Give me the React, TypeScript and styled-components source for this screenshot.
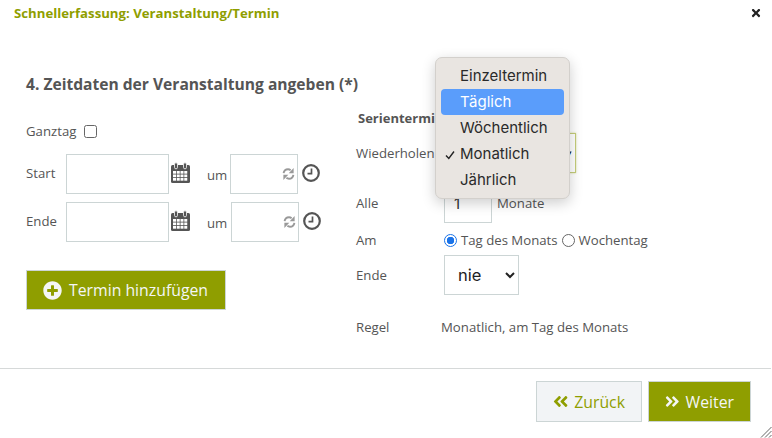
import React from "react";
import styled, { createGlobalStyle } from "styled-components";
import { FaAngleDoubleLeft, FaAngleDoubleRight, FaPlusCircle, FaTimes } from "react-icons/fa";

const Global = createGlobalStyle`
  html, body { margin: 0; padding: 0; background: #fff; }
  body { font-family: "Open Sans", sans-serif; color: #555; font-size: 13.2px; }
  * { box-sizing: border-box; }
`;

const Dialog = styled.div`
  position: relative;
  width: 772px;
  height: 438px;
  overflow: hidden;
  display: flex;
  flex-direction: column;
`;
const Header = styled.header`
  display: flex;
  justify-content: space-between;
  align-items: center;
  height: 26px;
  padding: 0 10px 0 14px;
`;
const Title = styled.h1`
  margin: 0;
  font-size: 13.2px;
  font-weight: 700;
  color: #8f9e00;
`;
const Close = styled.span`
  display: flex;
  color: #222;
  font-size: 12px;
`;
const Heading = styled.h2`
  margin: 48px 0 0 26px;
  font-size: 15.6px;
  line-height: 20px;
  font-weight: 700;
  color: #555;
`;
const Columns = styled.div`
  display: flex;
  height: 274px;
`;
const LeftColumn = styled.div`
  width: 356px;
  padding: 27px 0 0 26px;
`;
const RightColumn = styled.div`
  flex: 1;
  padding-top: 15px;
`;
const Ganztag = styled.label`
  display: flex;
  align-items: center;
  gap: 8px;
  height: 20px;
  line-height: 20px;
`;
const Box = styled.input`
  appearance: none;
  width: 13px;
  height: 13px;
  margin: 1px 0 0;
  border: 1px solid #666;
  border-radius: 2.5px;
  background: #fff;
`;
const DateRows = styled.div`
  display: flex;
  flex-direction: column;
  gap: 8px;
  margin-top: 13px;
`;
const DateRow = styled.div<{ $timeGap: number }>`
  display: grid;
  grid-template-columns: 40px 103px 21px ${p => p.$timeGap}px 68px 22px;
  height: 40px;
  align-items: center;
`;
const FieldLabel = styled.span`
  line-height: 18px;
  margin-top: -2px;
`;
const Um = styled.span`
  padding-left: 17px;
  line-height: 18px;
  margin-top: 2px;
`;
const TextBox = styled.div`
  height: 40px;
  border: 1px solid #ccd5d5;
  background: #fff;
`;
const TimeBox = styled(TextBox)`
  display: flex;
  align-items: center;
  justify-content: flex-end;
  padding: 0 2px 0 0;
`;
const CalIcon = styled.svg`
  width: 21px;
  height: 22px;
  margin: -2px 0 0 1px;
  display: block;
`;
const SpinIcon = styled.svg`
  width: 13px;
  height: 14px;
  display: block;
`;
const ClockIcon = styled.svg`
  width: 18px;
  height: 18px;
  display: block;
  justify-self: end;
  margin-top: -3px;
`;
const PrimaryButton = styled.button`
  display: inline-flex;
  align-items: center;
  gap: 6px;
  height: 40px;
  border: 1px solid #ccd5d5;
  background: #8f9e00;
  color: #f4f6f6;
  font: 400 15.8px "Open Sans", sans-serif;
  padding: 0 16px;
`;
const AddButton = styled(PrimaryButton)`
  width: 200px;
  margin-top: 28px;
  gap: 7px;
  & svg { font-size: 19px; }
`;
const SubHead = styled.h3`
  margin: 0 0 1px 2px;
  font-size: 13px;
  line-height: 18px;
  font-weight: 700;
  color: #555;
`;
const FormRow = styled.div<{ $h: number }>`
  display: grid;
  grid-template-columns: 88px 1fr;
  align-items: center;
  height: ${p => p.$h}px;
`;
const Controls = styled.div`
  display: flex;
  align-items: center;
`;
const RepeatSelect = styled.div`
  width: 132px;
  height: 40px;
  border: 1px solid #c4cc7a;
  box-shadow: 0 0 2px #d5db9e;
  background: #fff;
  display: flex;
  justify-content: flex-end;
  align-items: center;
  padding-right: 3px;
  font-size: 9px;
  color: #222;
`;
const NumberBox = styled.div`
  width: 48px;
  height: 40px;
  border: 1px solid #ccd5d5;
  color: #333;
  font: 400 15px Inter, sans-serif;
  padding: 10px 0 0 9px;
`;
const Unit = styled.span`
  margin-left: 5px;
`;
const Radio = styled.input`
  appearance: none;
  width: 13px;
  height: 13px;
  margin: 0 4px 0 0;
  border-radius: 50%;
  border: ${p => (p.checked ? "1px solid #1a73e8" : "1px solid #666")};
  background: ${p => (p.checked ? "radial-gradient(circle, #1a73e8 0 3.5px, #fff 4px)" : "#fff")};
`;
const RadioLabel = styled.label`
  display: flex;
  align-items: center;
  margin-right: 4px;
`;
const EndSelect = styled.select`
  width: 75px;
  height: 40px;
  border: 1px solid #ccd5d5;
  border-radius: 0;
  background: #fff;
  color: #222;
  font: 400 16.5px Inter, sans-serif;
  padding-left: 9px;
`;
const RuleText = styled.span`
  margin-left: -3px;
`;
const Footer = styled.footer`
  border-top: 1px solid #d6d9d9;
  margin-right: 1px;
  display: flex;
  justify-content: flex-end;
  gap: 6px;
  padding: 12px 20px 0 0;
`;
const BackButton = styled(PrimaryButton)`
  width: 106px;
  height: 41px;
  justify-content: center;
  background: #f2f4f6;
  color: #8f9e00;
  & svg { font-size: 19px; }
`;
const NextButton = styled(PrimaryButton)`
  width: 103px;
  height: 41px;
  justify-content: center;
  & svg { font-size: 19px; }
`;
const Grip = styled.svg`
  position: absolute;
  right: 0;
  bottom: 0;
  width: 12px;
  height: 12px;
`;
const Menu = styled.ul`
  position: absolute;
  left: 435px;
  top: 57px;
  width: 135px;
  height: 142px;
  margin: 0;
  padding: 5px;
  list-style: none;
  background: #e9e5e1;
  border: 1px solid #d3d0cc;
  border-radius: 7px;
  box-shadow: 0 4px 14px rgba(0, 0, 0, 0.2);
  font: 400 15px Inter, sans-serif;
  color: #2a2a2a;
`;
const MenuItem = styled.li<{ $active?: boolean }>`
  position: relative;
  height: 26px;
  line-height: 26px;
  padding-left: 19px;
  border-radius: 4px;
  background: ${p => (p.$active ? "#5a9dfb" : "transparent")};
  color: ${p => (p.$active ? "#fff" : "inherit")};
`;
const Check = styled.svg`
  position: absolute;
  left: 4px;
  top: 9px;
  width: 10px;
  height: 10px;
`;

const Calendar = () => (
  <CalIcon viewBox="0 0 21 22">
    <rect x="1" y="3" width="19" height="18" rx="1.5" fill="#555" />
    <g fill="#fff">
      {[9, 12.5, 16].map(y => [3, 6.75, 10.5, 14.25].map(x => <rect key={`${x}-${y}`} x={x} y={y} width="3" height="2.7" />))}
    </g>
    <rect x="4.5" y="0.8" width="3" height="6" rx="1.4" fill="#555" stroke="#fff" strokeWidth="0.8" />
    <rect x="13.5" y="0.8" width="3" height="6" rx="1.4" fill="#555" stroke="#fff" strokeWidth="0.8" />
  </CalIcon>
);

const Spin = () => (
  <SpinIcon viewBox="0 0 13 14">
    <path d="M1.6 6.2C2 3.8 3.8 2.3 6 2.3c1 0 1.9.3 2.6.9" stroke="#999" strokeWidth="1.9" fill="none" />
    <path d="M11.4 7.8C11 10.2 9.200 11.700 7 11.700c-1 0-1.900-.3-2.600-.9" stroke="#999" strokeWidth="1.9" fill="none" />
    <path d="M11.600 1v5.200H6.700z" fill="#999" />
    <path d="M1.400 13V7.800h4.900z" fill="#999" />
  </SpinIcon>
);

const Clock = () => (
  <ClockIcon viewBox="0 0 18 18">
    <circle cx="9" cy="9" r="7.800" stroke="#555" strokeWidth="2.200" fill="#fff" />
    <path d="M9.500 4.500v5.200H5.500" stroke="#555" strokeWidth="1.700" fill="none" />
  </ClockIcon>
);

const DateLine = ({ label, timeGap }: { label: string; timeGap: number }) => (
  <DateRow $timeGap={timeGap}>
    <FieldLabel>{label}</FieldLabel>
    <TextBox />
    <Calendar />
    <Um>um</Um>
    <TimeBox><Spin /></TimeBox>
    <Clock />
  </DateRow>
);

export default function App() {
  return (
    <Dialog>
      <Global />
      <Header>
        <Title>Schnellerfassung: Veranstaltung/Termin</Title>
        <Close><FaTimes /></Close>
      </Header>
      <Heading>4. Zeitdaten der Veranstaltung angeben (*)</Heading>
      <Columns>
        <LeftColumn>
          <Ganztag>Ganztag <Box type="checkbox" readOnly /></Ganztag>
          <DateRows>
            <DateLine label="Start" timeGap={40} />
            <DateLine label="Ende" timeGap={41} />
          </DateRows>
          <AddButton><FaPlusCircle /> Termin hinzufügen</AddButton>
        </LeftColumn>
        <RightColumn>
          <SubHead>Serientermin</SubHead>
          <FormRow $h={49}>
            <span>Wiederholen</span>
            <RepeatSelect>▾</RepeatSelect>
          </FormRow>
          <FormRow $h={51}>
            <span>Alle</span>
            <Controls><NumberBox>1</NumberBox><Unit>Monate</Unit></Controls>
          </FormRow>
          <FormRow $h={24}>
            <span>Am</span>
            <Controls>
              <RadioLabel><Radio type="radio" checked readOnly />Tag des Monats</RadioLabel>
              <RadioLabel><Radio type="radio" checked={false} readOnly />Wochentag</RadioLabel>
            </Controls>
          </FormRow>
          <FormRow $h={46}>
            <span>Ende</span>
            <Controls><EndSelect defaultValue="nie"><option>nie</option></EndSelect></Controls>
          </FormRow>
          <FormRow $h={58}>
            <span>Regel</span>
            <RuleText>Monatlich, am Tag des Monats</RuleText>
          </FormRow>
        </RightColumn>
      </Columns>
      <Footer>
        <BackButton><FaAngleDoubleLeft /> Zurück</BackButton>
        <NextButton><FaAngleDoubleRight /> Weiter</NextButton>
      </Footer>
      <Grip viewBox="0 0 12 12">
        <path d="M11.500 1 1 11.500M11.500 5 5 11.500M11.500 9 9 11.500" stroke="#666" strokeWidth="1" fill="none" />
      </Grip>
      <Menu>
        <MenuItem>Einzeltermin</MenuItem>
        <MenuItem $active>Täglich</MenuItem>
        <MenuItem>Wöchentlich</MenuItem>
        <MenuItem>
          <Check viewBox="0 0 10 10"><path d="M1 5.500 3.800 8.500 9 1.500" stroke="#222" strokeWidth="1.400" fill="none" /></Check>
          Monatlich
        </MenuItem>
        <MenuItem>Jährlich</MenuItem>
      </Menu>
    </Dialog>
  );
}
